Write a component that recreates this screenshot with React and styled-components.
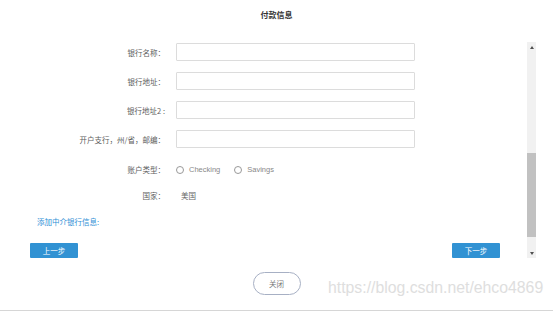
import React from 'react'
import styled, { createGlobalStyle } from 'styled-components'

const GlobalStyle = createGlobalStyle`
  html, body {
    margin: 0;
    padding: 0;
    background: #fff;
  }
  body {
    font-family: "Noto Sans CJK SC", "Liberation Sans", sans-serif;
  }
`

const Dialog = styled.div`
  position: relative;
  width: 553px;
  height: 310px;
  display: flex;
  flex-direction: column;
  border-bottom: 1px solid #d6d6d6;
  overflow: hidden;
`

const Header = styled.div`
  height: 42px;
  display: flex;
  justify-content: center;
  padding-top: 10px;
  box-sizing: border-box;
`

const Title = styled.h3`
  margin: 0;
  font-size: 8px;
  line-height: 10px;
  font-weight: bold;
  color: #333;
`

const Body = styled.div`
  height: 216px;
  display: flex;
`

const Content = styled.div`
  flex: 1;
  display: flex;
  flex-direction: column;
`

const Row = styled.div`
  display: grid;
  grid-template-columns: 165px 239px;
  column-gap: 11px;
  align-items: center;
  height: 18px;
  margin-top: ${({ top }) => top}px;
`

const Label = styled.label`
  text-align: right;
  font-size: 7.5px;
  color: #5e5e5e;
  white-space: nowrap;
`

const Input = styled.input`
  box-sizing: border-box;
  height: 18px;
  width: 100%;
  border: 1px solid #dcdcdc;
  border-radius: 1px;
  outline: none;
  background: #fff;
`

const Options = styled.div`
  display: flex;
  align-items: center;
  gap: 14px;
`

const Option = styled.span`
  display: flex;
  align-items: center;
  gap: 5px;
  font-family: "Liberation Sans", sans-serif;
  font-size: 7.5px;
  color: #888;
`

const Circle = styled.span`
  width: 6px;
  height: 6px;
  border: 1px solid #999;
  border-radius: 50%;
`

const Value = styled.span`
  padding-left: 5px;
  font-size: 7.5px;
  color: #666;
`

const LinkText = styled.a`
  margin: 9px 0 0 37px;
  font-size: 7.5px;
  line-height: 18px;
  color: #2f8fd6;
  cursor: pointer;
`

const Actions = styled.div`
  display: flex;
  justify-content: space-between;
  margin-top: 12px;
  padding: 0 27px 0 30px;
`

const StepButton = styled.button`
  width: 48px;
  height: 15px;
  padding: 0;
  border: none;
  border-radius: 1px;
  background: #3192d3;
  color: #fff;
  font-family: inherit;
  font-size: 7.5px;
`

const Scrollbar = styled.div`
  width: 9px;
  margin-right: 17px;
  display: flex;
  flex-direction: column;
  background: #f1f1f1;
`

const Arrow = styled.div`
  height: 10px;
  display: flex;
  align-items: center;
  justify-content: center;
  &::after {
    content: '';
    border-left: 2px solid transparent;
    border-right: 2px solid transparent;
    ${({ down }) => (down ? 'border-top: 3px solid #505050;' : 'border-bottom: 3px solid #505050;')}
  }
`

const Track = styled.div`
  flex: 1;
`

const Thumb = styled.div`
  margin-top: 101px;
  height: 84px;
  background: #c1c1c1;
`

const Footer = styled.div`
  flex: 1;
  display: flex;
  justify-content: center;
  padding-top: 14px;
`

const CloseButton = styled.button`
  width: 48px;
  height: 23px;
  border: 1px solid #a7b0c4;
  border-radius: 12px;
  background: #fff;
  color: #777;
  font-family: inherit;
  font-size: 7.5px;
  padding: 0;
`

const Watermark = styled.span`
  position: absolute;
  left: 328px;
  top: 279px;
  font-family: "Liberation Sans", sans-serif;
  font-size: 15.8px;
  color: #dedede;
  white-space: nowrap;
`

const fields = [
  { label: '银行名称：', top: 1 },
  { label: '银行地址：', top: 11 },
  { label: '银行地址2 :', top: 11 },
  { label: '开户支行，州/省，邮编：', top: 11 }
]

const App = () => {
  return (
    <Dialog>
      <GlobalStyle />
      <Header>
        <Title>付款信息</Title>
      </Header>
      <Body>
        <Content>
          {fields.map((f, idx) => (
            <Row key={idx} top={f.top}>
              <Label>{f.label}</Label>
              <Input />
            </Row>
          ))}
          <Row top={13}>
            <Label>账户类型：</Label>
            <Options>
              <Option><Circle />Checking</Option>
              <Option><Circle />Savings</Option>
            </Options>
          </Row>
          <Row top={9}>
            <Label>国家：</Label>
            <Value>美国</Value>
          </Row>
          <LinkText>添加中介银行信息:</LinkText>
          <Actions>
            <StepButton>上一步</StepButton>
            <StepButton>下一步</StepButton>
          </Actions>
        </Content>
        <Scrollbar>
          <Arrow />
          <Track>
            <Thumb />
          </Track>
          <Arrow down />
        </Scrollbar>
      </Body>
      <Footer>
        <CloseButton>关闭</CloseButton>
      </Footer>
      <Watermark>https://blog.csdn.net/ehco4869</Watermark>
    </Dialog>
  )
}

export default App
